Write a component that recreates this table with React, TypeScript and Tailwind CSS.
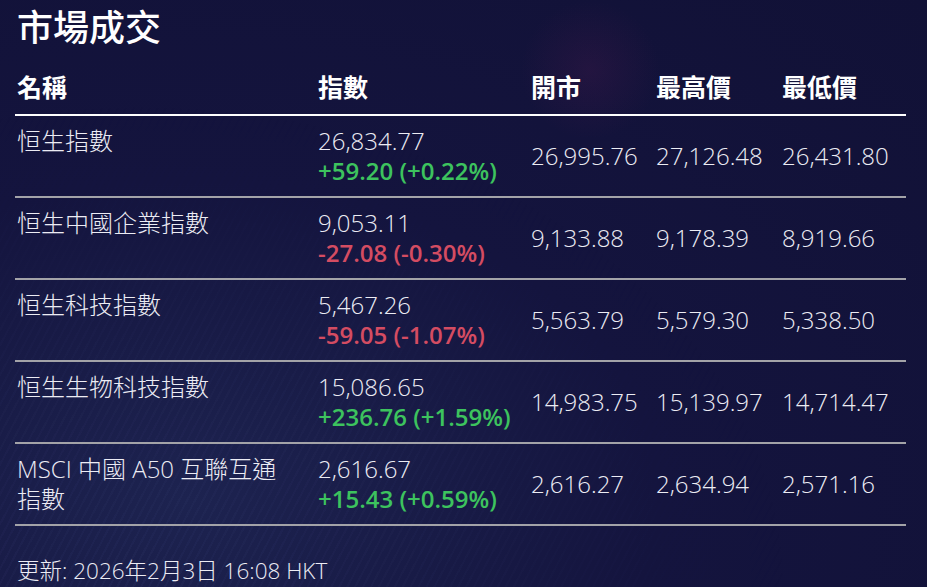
type Row = {
    name: string;
    value: string;
    change: string;
    up: boolean;
    open: string;
    high: string;
    low: string;
};

const rows: Row[] = [
    { name: "恒生指數", value: "26,834.77", change: "+59.20 (+0.22%)", up: true, open: "26,995.76", high: "27,126.48", low: "26,431.80" },
    { name: "恒生中國企業指數", value: "9,053.11", change: "-27.08 (-0.30%)", up: false, open: "9,133.88", high: "9,178.39", low: "8,919.66" },
    { name: "恒生科技指數", value: "5,467.26", change: "-59.05 (-1.07%)", up: false, open: "5,563.79", high: "5,579.30", low: "5,338.50" },
    { name: "恒生生物科技指數", value: "15,086.65", change: "+236.76 (+1.59%)", up: true, open: "14,983.75", high: "15,139.97", low: "14,714.47" },
    { name: "MSCI 中國 A50 互聯互通 指數", value: "2,616.67", change: "+15.43 (+0.59%)", up: true, open: "2,616.27", high: "2,634.94", low: "2,571.16" },
];

export default function App() {
    return (
        <div className="relative h-[587px] w-[927px] overflow-hidden bg-[radial-gradient(ellipse_at_20%_85%,#1d2350_0%,#14143e_45%,#111136_100%)] font-['Open_Sans','Noto_Sans_CJK_TC',sans-serif] text-[#ececf4]">
            {/* faint light streaks in the background */}
            <div className="pointer-events-none absolute inset-0 bg-[repeating-linear-gradient(-62deg,rgba(120,130,200,0.05)_0px,rgba(120,130,200,0.05)_2px,transparent_2px,transparent_7px)] [mask-image:radial-gradient(ellipse_at_15%_100%,black_0%,transparent_60%)]" />
            <div className="pointer-events-none absolute left-[520px] top-0 h-[140px] w-[140px] bg-[radial-gradient(circle,rgba(110,30,90,0.18)_0%,transparent_70%)]" />

            <div className="relative px-[15px] pt-[4px]">
                <h1 className="pl-[2px] text-[36px] font-medium leading-[48px] text-white">
                    市場成交
                </h1>

                <table className="mt-[18px] w-[891px] table-fixed border-collapse">
                    <colgroup>
                        <col className="w-[303px]" />
                        <col className="w-[213px]" />
                        <col className="w-[125px]" />
                        <col className="w-[126px]" />
                        <col className="w-[124px]" />
                    </colgroup>
                    <thead>
                        <tr className="border-b-2 border-white text-left text-[25px] font-bold leading-[34px] text-white">
                            <th className="pb-[10px] pl-[2px] font-bold">名稱</th>
                            <th className="pb-[10px] font-bold">指數</th>
                            <th className="pb-[10px] font-bold">開市</th>
                            <th className="pb-[10px] font-bold">最高價</th>
                            <th className="pb-[10px] font-bold">最低價</th>
                        </tr>
                    </thead>
                    <tbody className="text-[24px] font-light leading-[30px]">
                        {rows.map((row) => (
                            <tr key={row.name} className="border-b-2 border-[#a3a3a8]">
                                <td className="py-[10px] pl-[2px] pr-[20px] align-top">{row.name}</td>
                                <td className="py-[10px] align-top whitespace-nowrap">
                                    <div>{row.value}</div>
                                    <div className={`font-semibold ${row.up ? "text-[#3dc35e]" : "text-[#d44c62]"}`}>
                                        {row.change}
                                    </div>
                                </td>
                                <td className="py-[10px] align-middle whitespace-nowrap">{row.open}</td>
                                <td className="py-[10px] align-middle whitespace-nowrap">{row.high}</td>
                                <td className="py-[10px] align-middle whitespace-nowrap">{row.low}</td>
                            </tr>
                        ))}
                    </tbody>
                </table>

                <p className="mt-[30px] pl-[2px] text-[22.5px] font-light leading-[30px]">
                    更新: 2026年2月3日 16:08 HKT
                </p>
            </div>
        </div>
    );
}
